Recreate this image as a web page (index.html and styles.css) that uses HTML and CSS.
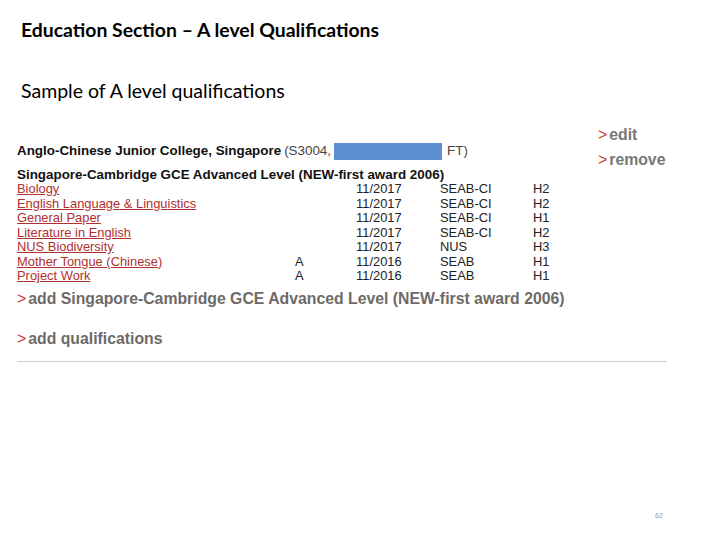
FILE: index.html
```html
<!DOCTYPE html>
<html>
<head>
<meta charset="utf-8">
<link rel="stylesheet" href="styles.css">
</head>
<body>
<div class="slide">
  <h1 class="title">Education Section – A level Qualifications</h1>
  <p class="subtitle">Sample of A level qualifications</p>
  <div class="shot">
    <div class="main">
      <div class="school"><b>Anglo-Chinese Junior College, Singapore</b> (S3004, <span class="redact"></span> FT)</div>
      <div class="exam">Singapore-Cambridge GCE Advanced Level (NEW-first award 2006)</div>
      <div class="rows">
        <a class="subj">Biology</a><span></span><span>11/2017</span><span>SEAB-CI</span><span>H2</span>
        <a class="subj">English Language &amp; Linguistics</a><span></span><span>11/2017</span><span>SEAB-CI</span><span>H2</span>
        <a class="subj">General Paper</a><span></span><span>11/2017</span><span>SEAB-CI</span><span>H1</span>
        <a class="subj">Literature in English</a><span></span><span>11/2017</span><span>SEAB-CI</span><span>H2</span>
        <a class="subj">NUS Biodiversity</a><span></span><span>11/2017</span><span>NUS</span><span>H3</span>
        <a class="subj">Mother Tongue (Chinese)</a><span>A</span><span>11/2016</span><span>SEAB</span><span>H1</span>
        <a class="subj">Project Work</a><span>A</span><span>11/2016</span><span>SEAB</span><span>H1</span>
      </div>
      <div class="add add-exam"><span class="gt">&gt;</span>add Singapore-Cambridge GCE Advanced Level (NEW-first award 2006)</div>
      <div class="add add-qual"><span class="gt">&gt;</span>add qualifications</div>
    </div>
    <div class="actions">
      <div class="act"><span class="gt">&gt;</span>edit</div>
      <div class="act"><span class="gt">&gt;</span>remove</div>
    </div>
  </div>
  <div class="rule"></div>
  <div class="pagenum">62</div>
</div>
</body>
</html>
```
FILE: styles.css
```css
html, body {
  margin: 0;
  padding: 0;
  background: #fff;
}
.slide {
  width: 720px;
  height: 540px;
  box-sizing: border-box;
  padding: 0 0 0 17px;
  font-family: "Liberation Sans", Arial, sans-serif;
}
.title {
  margin: 0;
  padding: 19px 0 0 4px;
  font-family: Lato, "Liberation Sans", sans-serif;
  font-weight: 700;
  font-size: 19.4px;
  line-height: 22px;
  color: #000;
}
.subtitle {
  margin: 0;
  padding: 39px 0 0 4px;
  font-family: Lato, "Liberation Sans", sans-serif;
  font-size: 19.5px;
  line-height: 22px;
  color: #000;
}
.shot {
  display: flex;
  margin-top: 20px;
}
.main {
  width: 581px;
}
.school {
  padding-top: 20px;
  font-size: 13.4px;
  line-height: 18px;
  color: #444;
  display: flex;
  align-items: center;
  white-space: nowrap;
}
.school b {
  color: #111;
  margin-right: 3px;
}
.redact {
  display: inline-block;
  width: 108px;
  height: 17px;
  background: #5b8fd0;
  margin: 0 5px 0 3px;
}
.exam {
  margin-top: 7px;
  font-size: 13.4px;
  font-weight: 700;
  line-height: 15px;
  color: #111;
}
.rows {
  display: grid;
  grid-template-columns: 278px 61px 84px 93px auto;
  grid-auto-rows: 14.5px;
  font-size: 12.9px;
  line-height: 14.5px;
  color: #222;
}
.subj {
  color: #b03030;
  text-decoration: underline;
}
.add {
  font-family: "Liberation Sans", sans-serif;
  font-weight: 700;
  font-size: 15.8px;
  line-height: 20px;
  color: #6e6a68;
}
.add-exam {
  margin-top: 5px;
}
.add-qual {
  margin-top: 20px;
}
.gt {
  color: #c0392b;
  font-weight: 400;
  margin-right: 2px;
}
.act {
  font-family: "Liberation Sans", sans-serif;
  font-weight: 700;
  font-size: 15.8px;
  line-height: 25px;
  color: #777;
}
.rule {
  width: 650px;
  height: 1px;
  background: #cfcfcf;
  margin-top: 12px;
}
.pagenum {
  margin: 150px 0 0 638px;
  font-size: 7px;
  color: #999;
}
```
